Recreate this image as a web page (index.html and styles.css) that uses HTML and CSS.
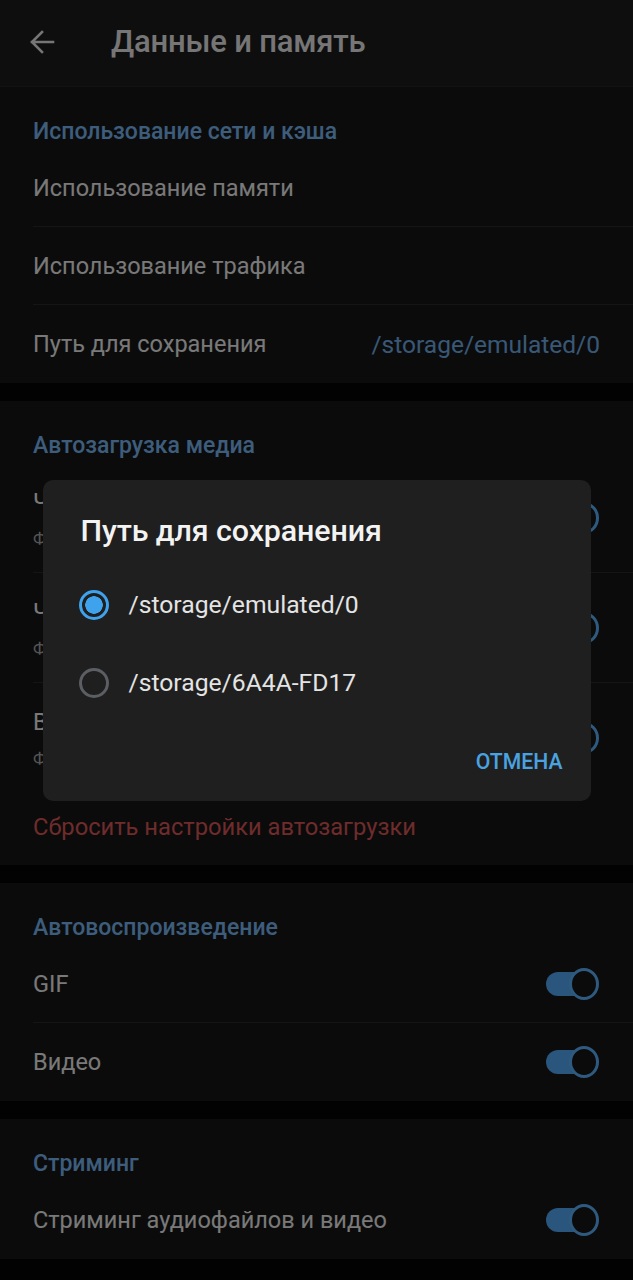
FILE: index.html
```html
<!DOCTYPE html>
<html lang="ru">
<head>
<meta charset="utf-8">
<title>Данные и память</title>
<link rel="stylesheet" href="styles.css">
</head>
<body>
<div class="screen">
  <header class="appbar">
    <svg class="back" width="28" height="28" viewBox="0 0 28 28" aria-hidden="true">
      <path d="M25 14H4M14 4L4 14l10 10" fill="none" stroke="currentColor" stroke-width="2.6" stroke-linecap="square"/>
    </svg>
    <h1 class="appbar-title">Данные и память</h1>
  </header>

  <section class="group">
    <h2 class="group-title">Использование сети и кэша</h2>
    <div class="row"><span class="row-text">Использование памяти</span></div>
    <div class="row"><span class="row-text">Использование трафика</span></div>
    <div class="row row-last"><span class="row-text">Путь для сохранения</span><span class="row-value">/storage/emulated/0</span></div>
  </section>

  <section class="group">
    <h2 class="group-title">Автозагрузка медиа</h2>
    <div class="row row-tall">
      <div class="row-lines"><span class="row-text">Через мобильную сеть</span><span class="row-sub">Фото, видео, файлы</span></div>
      <span class="toggle"><span class="knob"></span></span>
    </div>
    <div class="row row-tall">
      <div class="row-lines"><span class="row-text">Через сети Wi-Fi</span><span class="row-sub">Фото, видео, файлы</span></div>
      <span class="toggle"><span class="knob"></span></span>
    </div>
    <div class="row row-tall row-last">
      <div class="row-lines"><span class="row-text">В роуминге</span><span class="row-sub">Фото, видео, файлы</span></div>
      <span class="toggle"><span class="knob"></span></span>
    </div>
    <div class="reset">Сбросить настройки автозагрузки</div>
  </section>

  <section class="group">
    <h2 class="group-title">Автовоспроизведение</h2>
    <div class="row"><span class="row-text">GIF</span><span class="toggle"><span class="knob"></span></span></div>
    <div class="row row-last"><span class="row-text">Видео</span><span class="toggle"><span class="knob"></span></span></div>
  </section>

  <section class="group">
    <h2 class="group-title">Стриминг</h2>
    <div class="row row-last"><span class="row-text">Стриминг аудиофайлов и видео</span><span class="toggle"><span class="knob"></span></span></div>
  </section>
</div>

<div class="scrim">
  <div class="dialog" role="dialog">
    <h3 class="dialog-title">Путь для сохранения</h3>
    <div class="options">
      <label class="option"><span class="radio radio-on"></span><span class="option-text">/storage/emulated/0</span></label>
      <label class="option"><span class="radio"></span><span class="option-text">/storage/6A4A-FD17</span></label>
    </div>
    <div class="actions"><span class="btn">ОТМЕНА</span></div>
  </div>
</div>
</body>
</html>
```

FILE: styles.css
```css
* { box-sizing: border-box; }
html, body { margin: 0; padding: 0; }
body {
  background: #040404;
  font-family: Roboto, "Noto Sans", sans-serif;
  width: 633px;
  height: 1280px;
  overflow: hidden;
}
.screen { display: flex; flex-direction: column; gap: 18px; }
.appbar {
  height: 87px;
  background: #1c1c1c;
  border-bottom: 1px solid #242424;
  display: flex;
  align-items: center;
  padding-left: 28px;
  margin-bottom: -18px;
  color: #ececec;
}
.back { flex: none; margin-top: -2px; }
.appbar-title {
  margin: -2px 0 0 55px;
  font-size: 31px;
  font-weight: 500;
  line-height: 36px;
  letter-spacing: -0.2px;
}
.group { background: #161616; }
.group-title {
  margin: 0;
  padding: 33px 33px 5px;
  font-size: 23px;
  line-height: 24px;
  font-weight: 500;
  color: #7abbf6;
}
.row {
  margin-left: 33px;
  padding-right: 37px;
  height: 78px;
  border-bottom: 1px solid #2a2a2a;
  display: flex;
  align-items: center;
  justify-content: space-between;
}
.row-last { border-bottom: none; }
.row-text { font-size: 23.5px; color: #f2f2f2; }
.row-value { font-size: 24.5px; color: #72b0ea; margin-right: -4px; }
.row-tall { height: 110px; }
.row-lines { display: flex; flex-direction: column; gap: 12px; }
.row-sub { font-size: 17px; color: #aaa; }
.reset {
  padding: 22px 33px 26px;
  line-height: 24px;
  font-size: 23.7px;
  color: #dc5858;
}
.toggle {
  position: relative;
  width: 50px;
  height: 24px;
  border-radius: 12px;
  background: #55aaf8;
  flex: none;
}
.knob {
  position: absolute;
  right: -3px;
  top: -4px;
  width: 30px;
  height: 32px;
  border-radius: 50%;
  background: #161616;
  border: 3px solid #5eb4ff;
}
.scrim {
  position: fixed;
  inset: 0;
  background: rgba(0, 0, 0, 0.5);
  display: flex;
  align-items: center;
  justify-content: center;
}
.dialog {
  width: 548px;
  height: 321px;
  background: #1f1f1f;
  border-radius: 10px;
  padding: 34px 28px 0 36px;
  display: flex;
  flex-direction: column;
}
.dialog-title {
  margin: 0 0 0 2px;
  font-size: 30.4px;
  line-height: 34px;
  font-weight: 500;
  color: #f3f3f3;
  letter-spacing: -0.1px;
}
.options { display: flex; flex-direction: column; margin-top: 18px; }
.option {
  height: 78px;
  display: flex;
  align-items: center;
  gap: 20px;
}
.radio {
  width: 30px;
  height: 30px;
  border-radius: 50%;
  border: 3px solid #5b5e62;
  flex: none;
}
.radio-on {
  border-color: #3fa2ec;
  background: radial-gradient(circle, #3fa2ec 0 8.5px, transparent 9px);
}
.option-text { font-size: 24.7px; color: #e4e4e4; }
.actions { display: flex; justify-content: flex-end; margin-top: 28px; }
.btn { font-size: 21.2px; line-height: 24px; font-weight: 500; color: #4aa3e0; }
```
